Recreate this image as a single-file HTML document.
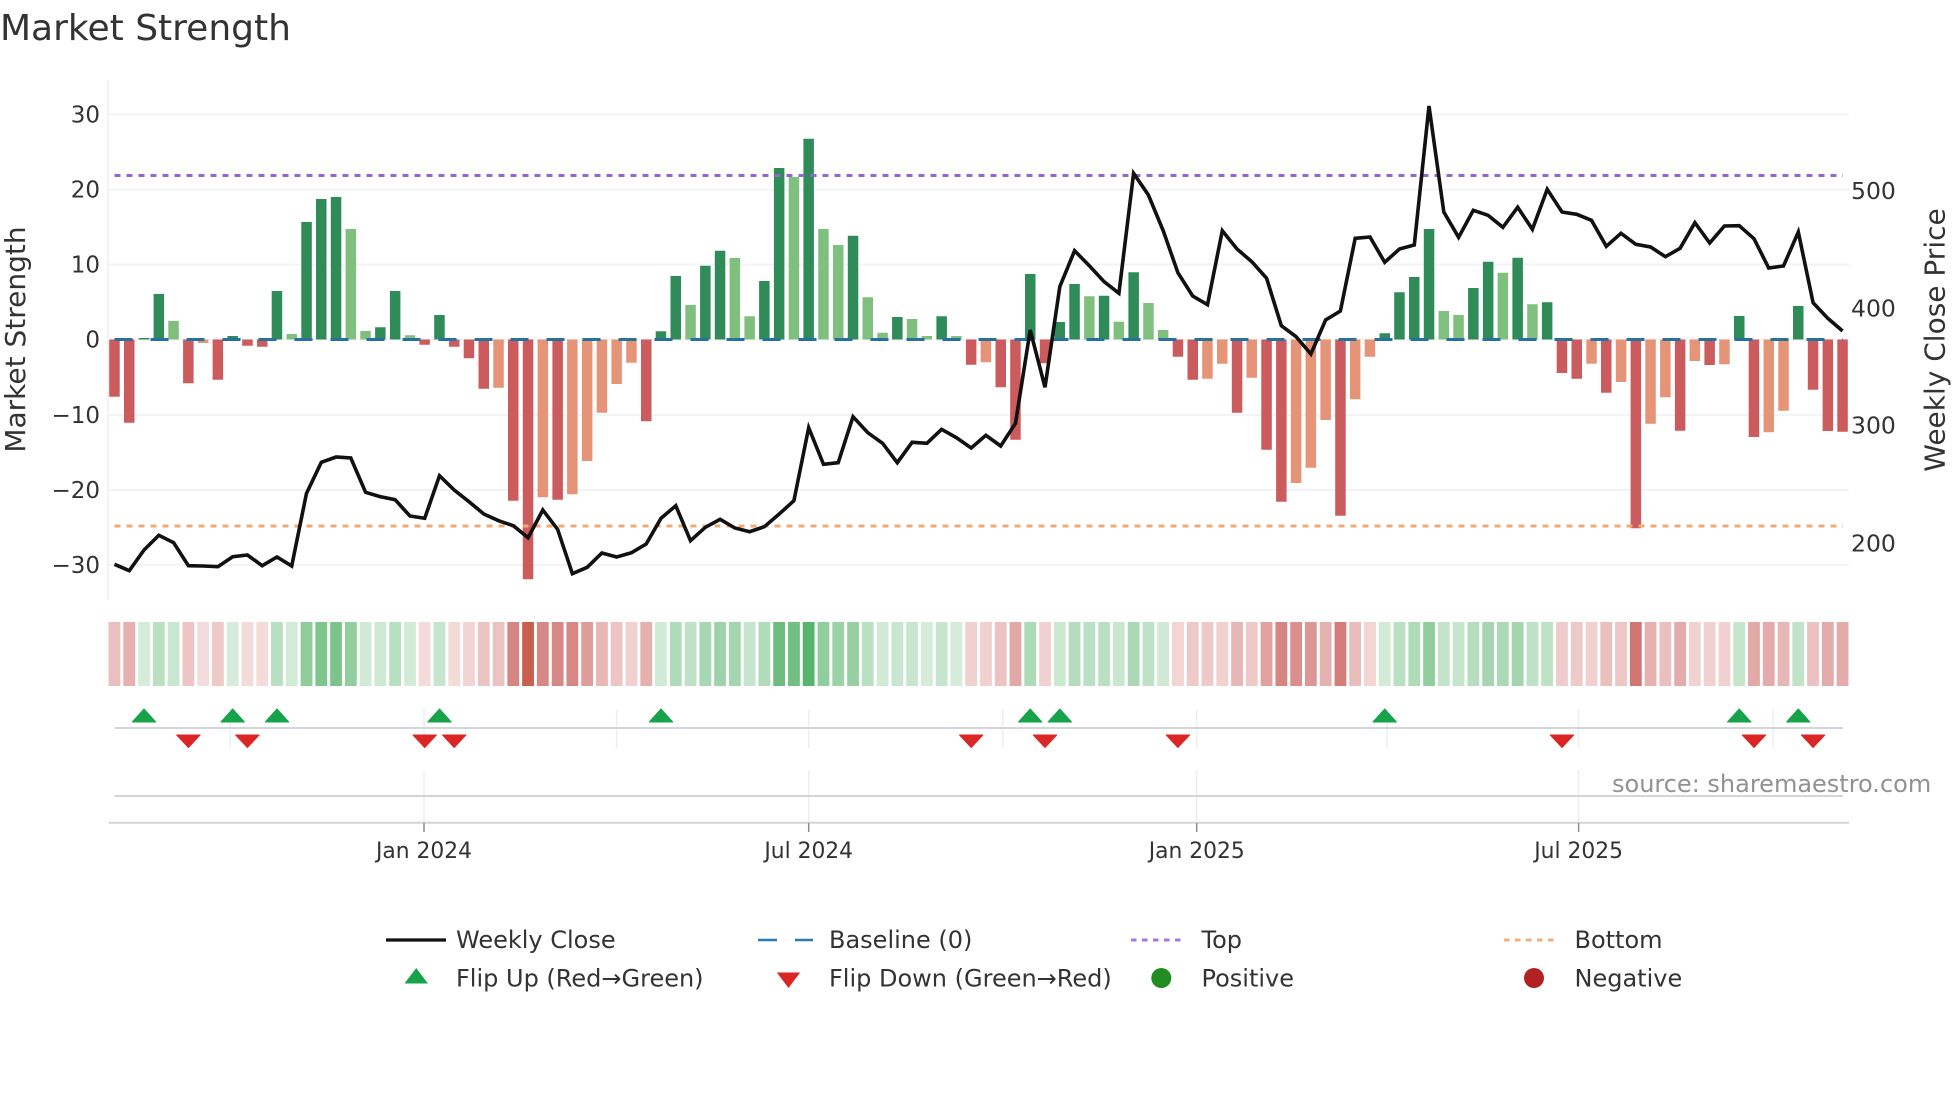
<!DOCTYPE html>
<html><head><meta charset="utf-8"><title>Market Strength</title>
<style>
html,body{margin:0;padding:0;background:#fff;width:1960px;height:1102px;overflow:hidden}
svg{display:block}
text{font-family:"DejaVu Sans","Liberation Sans",sans-serif;fill:#333}
.t{font-size:24px}
.yl{font-size:23px}
.yr{font-size:23.5px}
.xt{font-size:21.8px}
.cells rect{y:622px;width:11.8px;height:64px}
.g{fill:#58b46c}.r{fill:#c85a56}
</style></head><body>
<svg xmlns="http://www.w3.org/2000/svg" width="1960" height="1102" viewBox="0 0 1960 1102">
<rect width="1960" height="1102" fill="#fff"/>
<text x="0" y="40" style="font-size:36px">Market Strength</text>

<!-- grid -->
<path d="M108 114.5H1849M108 189.5H1849M108 264.5H1849M108 339.5H1849M108 415H1849M108 490H1849M108 565H1849" stroke="#f1f3f6" stroke-width="2" fill="none"/>
<path d="M108 80V599" stroke="#f1f3f6" stroke-width="2" fill="none"/>

<!-- bars -->
<path fill="#2f8b58" d="M138.8 339.5V338h10.5V339.5zM153.6 339.5V294h10.5V339.5zM227.4 339.5V336h10.5V339.5zM271.7 339.5V291h10.5V339.5zM301.3 339.5V222h10.5V339.5zM316 339.5V199h10.5V339.5zM330.8 339.5V197h10.5V339.5zM375.1 339.5V327.3h10.5V339.5zM389.9 339.5V291h10.5V339.5zM434.2 339.5V315h10.5V339.5zM655.7 339.5V331.3h10.5V339.5zM670.5 339.5V276h10.5V339.5zM700.1 339.5V265.7h10.5V339.5zM714.8 339.5V250.7h10.5V339.5zM759.1 339.5V281h10.5V339.5zM773.9 339.5V168h10.5V339.5zM803.4 339.5V138.7h10.5V339.5zM847.8 339.5V235.7h10.5V339.5zM892.1 339.5V317h10.5V339.5zM936.4 339.5V316.3h10.5V339.5zM1025 339.5V274h10.5V339.5zM1054.5 339.5V322h10.5V339.5zM1069.3 339.5V284h10.5V339.5zM1098.8 339.5V295.7h10.5V339.5zM1128.4 339.5V272.3h10.5V339.5zM1379.5 339.5V333.3h10.5V339.5zM1394.2 339.5V292.3h10.5V339.5zM1409 339.5V277h10.5V339.5zM1423.8 339.5V229h10.5V339.5zM1468.1 339.5V288h10.5V339.5zM1482.9 339.5V261.7h10.5V339.5zM1512.4 339.5V257.7h10.5V339.5zM1541.9 339.5V302.3h10.5V339.5zM1734 339.5V316h10.5V339.5zM1793 339.5V306h10.5V339.5z"/>
<path fill="#7fc07f" d="M168.3 339.5V321h10.5V339.5zM286.5 339.5V334h10.5V339.5zM345.6 339.5V229h10.5V339.5zM360.3 339.5V331h10.5V339.5zM404.7 339.5V335.3h10.5V339.5zM685.3 339.5V305h10.5V339.5zM729.6 339.5V258h10.5V339.5zM744.4 339.5V316.3h10.5V339.5zM788.7 339.5V177h10.5V339.5zM818.2 339.5V229h10.5V339.5zM833 339.5V245h10.5V339.5zM862.5 339.5V297.3h10.5V339.5zM877.3 339.5V332.7h10.5V339.5zM906.8 339.5V319h10.5V339.5zM921.6 339.5V336h10.5V339.5zM951.1 339.5V336h10.5V339.5zM1084.1 339.5V296.3h10.5V339.5zM1113.6 339.5V321.7h10.5V339.5zM1143.2 339.5V303h10.5V339.5zM1157.9 339.5V330h10.5V339.5zM1438.6 339.5V311h10.5V339.5zM1453.3 339.5V315h10.5V339.5zM1497.6 339.5V272.7h10.5V339.5zM1527.2 339.5V304.3h10.5V339.5z"/>
<path fill="#cb5b5c" d="M109.2 339.5V396.7h10.5V339.5zM124 339.5V422.7h10.5V339.5zM183.1 339.5V383.3h10.5V339.5zM212.6 339.5V379.7h10.5V339.5zM242.2 339.5V345.7h10.5V339.5zM257 339.5V346.7h10.5V339.5zM419.4 339.5V344.7h10.5V339.5zM449 339.5V346.7h10.5V339.5zM463.7 339.5V358.3h10.5V339.5zM478.5 339.5V388.7h10.5V339.5zM508 339.5V500.7h10.5V339.5zM522.8 339.5V579.3h10.5V339.5zM552.4 339.5V499.7h10.5V339.5zM641 339.5V421.3h10.5V339.5zM965.9 339.5V364.7h10.5V339.5zM995.5 339.5V387.3h10.5V339.5zM1010.2 339.5V439.7h10.5V339.5zM1039.8 339.5V363.3h10.5V339.5zM1172.7 339.5V356.7h10.5V339.5zM1187.5 339.5V379.7h10.5V339.5zM1231.8 339.5V412.7h10.5V339.5zM1261.3 339.5V449.7h10.5V339.5zM1276.1 339.5V501.7h10.5V339.5zM1335.2 339.5V515.7h10.5V339.5zM1556.7 339.5V373h10.5V339.5zM1571.5 339.5V378.7h10.5V339.5zM1601 339.5V392.7h10.5V339.5zM1630.6 339.5V528.3h10.5V339.5zM1674.9 339.5V430.7h10.5V339.5zM1704.4 339.5V365h10.5V339.5zM1748.7 339.5V437h10.5V339.5zM1807.8 339.5V389.7h10.5V339.5zM1822.6 339.5V431h10.5V339.5zM1837.3 339.5V431.7h10.5V339.5z"/>
<path fill="#e59478" d="M197.9 339.5V343h10.5V339.5zM493.3 339.5V387.7h10.5V339.5zM537.6 339.5V497.3h10.5V339.5zM567.1 339.5V494.3h10.5V339.5zM581.9 339.5V461h10.5V339.5zM596.7 339.5V412.7h10.5V339.5zM611.4 339.5V384h10.5V339.5zM626.2 339.5V362.7h10.5V339.5zM980.7 339.5V362.3h10.5V339.5zM1202.2 339.5V378.7h10.5V339.5zM1217 339.5V363.7h10.5V339.5zM1246.5 339.5V377.7h10.5V339.5zM1290.9 339.5V483h10.5V339.5zM1305.6 339.5V467.7h10.5V339.5zM1320.4 339.5V420h10.5V339.5zM1349.9 339.5V399.3h10.5V339.5zM1364.7 339.5V356.7h10.5V339.5zM1586.3 339.5V363.7h10.5V339.5zM1615.8 339.5V382h10.5V339.5zM1645.3 339.5V423.7h10.5V339.5zM1660.1 339.5V397.3h10.5V339.5zM1689.6 339.5V361h10.5V339.5zM1719.2 339.5V364.3h10.5V339.5zM1763.5 339.5V432.3h10.5V339.5zM1778.3 339.5V410.7h10.5V339.5z"/>

<!-- reference lines -->
<path d="M114.5 339.5H1843" stroke="#27719f" stroke-width="3" stroke-dasharray="18 18" fill="none"/>
<path d="M114.5 175.5H1843" stroke="#9467cf" stroke-width="3" stroke-dasharray="6 6" fill="none"/>
<path d="M114.5 526H1843" stroke="#f2aa74" stroke-width="3" stroke-dasharray="6 6" fill="none"/>

<!-- weekly close -->
<polyline fill="none" stroke="#111" stroke-width="3.6" stroke-linejoin="miter" points="114.5,564.3 129.3,570.7 144,550 158.8,535.3 173.6,542.7 188.4,565.7 203.1,566 217.9,566.7 232.7,556.7 247.4,555 262.2,565.7 277,557 291.7,566 306.5,493.3 321.3,462.3 336.1,457 350.8,458 365.6,492.3 380.4,496.7 395.1,499.7 409.9,516 424.7,518.3 439.5,475.7 454.2,490 469,501.7 483.8,514 498.5,520.7 513.3,525.7 528.1,537.7 542.8,510 557.6,529.3 572.4,573.7 587.2,567.3 601.9,553 616.7,557 631.5,552.7 646.2,544 661,518.3 675.8,505.7 690.5,540.7 705.3,527.3 720.1,519.3 734.9,528 749.6,531.7 764.4,526.7 779.2,514 793.9,500.7 808.7,427.7 823.5,464.3 838.2,462.7 853,416.7 867.8,432.7 882.6,443.3 897.3,462.7 912.1,442.3 926.9,443.3 941.6,429.3 956.4,437.7 971.2,448 985.9,435.3 1000.7,446 1015.5,423.3 1030.2,330 1045,387.3 1059.8,286.7 1074.6,250.7 1089.3,265.7 1104.1,281.7 1118.9,293.3 1133.6,173.3 1148.4,195 1163.2,230.7 1177.9,272.7 1192.7,296 1207.5,304.7 1222.3,230.7 1237,249 1251.8,261.7 1266.6,278.3 1281.3,325.7 1296.1,336.7 1310.9,354 1325.6,320 1340.4,311 1355.2,238.3 1370,237 1384.7,262.3 1399.5,249 1414.3,245 1429,106 1443.8,212 1458.6,237.3 1473.3,210.3 1488.1,215.3 1502.9,227.3 1517.7,207.3 1532.4,229.3 1547.2,189.3 1562,212 1576.7,214.3 1591.5,220.3 1606.3,246.3 1621,233.3 1635.8,244.3 1650.6,247 1665.4,256.7 1680.1,248.3 1694.9,222.7 1709.7,243 1724.4,226 1739.2,225.7 1754,238.7 1768.7,268 1783.5,266 1798.3,232 1813.1,302.7 1827.8,318.3 1842.6,331"/>

<!-- heat strip -->
<g class="cells" transform="translate(-.65 0)">
<rect class="r" x="109.2" opacity=".39"/><rect class="r" x="124" opacity=".48"/><rect class="g" x="138.8" opacity=".26"/><rect class="g" x="153.6" opacity=".42"/><rect class="g" x="168.3" opacity=".32"/><rect class="r" x="183.1" opacity=".35"/><rect class="r" x="197.9" opacity=".21"/><rect class="r" x="212.6" opacity=".33"/><rect class="g" x="227.4" opacity=".26"/><rect class="r" x="242.2" opacity=".22"/>
<rect class="r" x="257" opacity=".22"/><rect class="g" x="271.7" opacity=".43"/><rect class="g" x="286.5" opacity=".27"/><rect class="g" x="301.3" opacity=".68"/><rect class="g" x="316" opacity=".77"/><rect class="g" x="330.8" opacity=".78"/><rect class="g" x="345.6" opacity=".66"/><rect class="g" x="360.3" opacity=".28"/><rect class="g" x="375.1" opacity=".3"/><rect class="g" x="389.9" opacity=".43"/>
<rect class="g" x="404.7" opacity=".27"/><rect class="r" x="419.4" opacity=".22"/><rect class="g" x="434.2" opacity=".34"/><rect class="r" x="449" opacity=".22"/><rect class="r" x="463.7" opacity=".26"/><rect class="r" x="478.5" opacity=".36"/><rect class="r" x="493.3" opacity=".36"/><rect class="r" x="508" opacity=".74"/><rect class="r" x="522.8" opacity="1" style="fill:#c95f4f"/><rect class="r" x="537.6" opacity=".73"/>
<rect class="r" x="552.4" opacity=".73"/><rect class="r" x="567.1" opacity=".72"/><rect class="r" x="581.9" opacity=".6"/><rect class="r" x="596.7" opacity=".44"/><rect class="r" x="611.4" opacity=".35"/><rect class="r" x="626.2" opacity=".28"/><rect class="r" x="641" opacity=".47"/><rect class="g" x="655.7" opacity=".28"/><rect class="g" x="670.5" opacity=".48"/><rect class="g" x="685.3" opacity=".38"/>
<rect class="g" x="700.1" opacity=".52"/><rect class="g" x="714.8" opacity=".58"/><rect class="g" x="729.6" opacity=".55"/><rect class="g" x="744.4" opacity=".34"/><rect class="g" x="759.1" opacity=".47"/><rect class="g" x="773.9" opacity=".88"/><rect class="g" x="788.7" opacity=".85"/><rect class="g" x="803.4" opacity="1"/><rect class="g" x="818.2" opacity=".66"/><rect class="g" x="833" opacity=".6"/>
<rect class="g" x="847.8" opacity=".63"/><rect class="g" x="862.5" opacity=".41"/><rect class="g" x="877.3" opacity=".28"/><rect class="g" x="892.1" opacity=".33"/><rect class="g" x="906.8" opacity=".33"/><rect class="g" x="921.6" opacity=".26"/><rect class="g" x="936.4" opacity=".34"/><rect class="g" x="951.1" opacity=".26"/><rect class="r" x="965.9" opacity=".28"/><rect class="r" x="980.7" opacity=".28"/>
<rect class="r" x="995.5" opacity=".36"/><rect class="r" x="1010.2" opacity=".53"/><rect class="g" x="1025" opacity=".49"/><rect class="r" x="1039.8" opacity=".28"/><rect class="g" x="1054.5" opacity=".31"/><rect class="g" x="1069.3" opacity=".45"/><rect class="g" x="1084.1" opacity=".41"/><rect class="g" x="1098.8" opacity=".41"/><rect class="g" x="1113.6" opacity=".32"/><rect class="g" x="1128.4" opacity=".5"/>
<rect class="g" x="1143.2" opacity=".39"/><rect class="g" x="1157.9" opacity=".29"/><rect class="r" x="1172.7" opacity=".26"/><rect class="r" x="1187.5" opacity=".33"/><rect class="r" x="1202.2" opacity=".33"/><rect class="r" x="1217" opacity=".28"/><rect class="r" x="1231.8" opacity=".44"/><rect class="r" x="1246.5" opacity=".33"/><rect class="r" x="1261.3" opacity=".57"/><rect class="r" x="1276.1" opacity=".74"/>
<rect class="r" x="1290.9" opacity=".68"/><rect class="r" x="1305.6" opacity=".63"/><rect class="r" x="1320.4" opacity=".47"/><rect class="r" x="1335.2" opacity=".79"/><rect class="r" x="1349.9" opacity=".4"/><rect class="r" x="1364.7" opacity=".26"/><rect class="g" x="1379.5" opacity=".27"/><rect class="g" x="1394.2" opacity=".42"/><rect class="g" x="1409" opacity=".48"/><rect class="g" x="1423.8" opacity=".66"/>
<rect class="g" x="1438.6" opacity=".36"/><rect class="g" x="1453.3" opacity=".34"/><rect class="g" x="1468.1" opacity=".44"/><rect class="g" x="1482.9" opacity=".54"/><rect class="g" x="1497.6" opacity=".5"/><rect class="g" x="1512.4" opacity=".55"/><rect class="g" x="1527.2" opacity=".38"/><rect class="g" x="1541.9" opacity=".39"/><rect class="r" x="1556.7" opacity=".31"/><rect class="r" x="1571.5" opacity=".33"/>
<rect class="r" x="1586.3" opacity=".28"/><rect class="r" x="1601" opacity=".38"/><rect class="r" x="1615.8" opacity=".34"/><rect class="r" x="1630.6" opacity=".83"/><rect class="r" x="1645.3" opacity=".48"/><rect class="r" x="1660.1" opacity=".39"/><rect class="r" x="1674.9" opacity=".5"/><rect class="r" x="1689.6" opacity=".27"/><rect class="r" x="1704.4" opacity=".28"/><rect class="r" x="1719.2" opacity=".28"/>
<rect class="g" x="1734" opacity=".34"/><rect class="r" x="1748.7" opacity=".52"/><rect class="r" x="1763.5" opacity=".51"/><rect class="r" x="1778.3" opacity=".44"/><rect class="g" x="1793" opacity=".37"/><rect class="r" x="1807.8" opacity=".37"/><rect class="r" x="1822.6" opacity=".5"/><rect class="r" x="1837.3" opacity=".51"/>
</g>

<!-- vertical guides in lower rows -->
<path d="M230.2 709V748M424 709V748M616.6 709V748M808.7 709V748M1002.7 709V748M1196.7 709V748M1387 709V748M1578.6 709V748M1773 709V748M424 770V822M808.7 770V822M1196.7 770V822M1578.6 770V822" stroke="#eceef2" stroke-width="1.5" fill="none"/>
<path d="M114.5 728H1843M114.5 796H1843" stroke="#d2d5da" stroke-width="2" fill="none"/>
<path d="M108.5 822.7H1849" stroke="#d2d5da" stroke-width="2" fill="none"/>
<path d="M424 823V832M808.7 823V832M1196.7 823V832M1578.6 823V832" stroke="#8c8c8c" stroke-width="1.5" fill="none"/>

<!-- flip markers -->
<path fill="#17a34a" stroke="#17a34a" stroke-width="1" stroke-linejoin="round" d="M144 709l11.7 13h-23.4zM232.7 709l11.7 13h-23.4zM277 709l11.7 13h-23.4zM439.5 709l11.7 13h-23.4zM661 709l11.7 13h-23.4zM1030.2 709l11.7 13h-23.4zM1059.8 709l11.7 13h-23.4zM1384.7 709l11.7 13h-23.4zM1739.2 709l11.7 13h-23.4zM1798.3 709l11.7 13h-23.4z"/>
<path fill="#dc2626" stroke="#dc2626" stroke-width="1" stroke-linejoin="round" d="M188.4 747.5l11.7 -12.5h-23.4zM247.4 747.5l11.7 -12.5h-23.4zM424.7 747.5l11.7 -12.5h-23.4zM454.2 747.5l11.7 -12.5h-23.4zM971.2 747.5l11.7 -12.5h-23.4zM1045 747.5l11.7 -12.5h-23.4zM1177.9 747.5l11.7 -12.5h-23.4zM1562 747.5l11.7 -12.5h-23.4zM1754 747.5l11.7 -12.5h-23.4zM1813.1 747.5l11.7 -12.5h-23.4z"/>

<!-- left ticks -->
<g class="yl" text-anchor="end">
<text x="100" y="122.5">30</text>
<text x="100" y="197.5">20</text>
<text x="100" y="272.5">10</text>
<text x="100" y="347.5">0</text>
<text x="100" y="423">−10</text>
<text x="100" y="498">−20</text>
<text x="100" y="573">−30</text>
</g>
<!-- right ticks -->
<g class="yr">
<text x="1851" y="199">500</text>
<text x="1851" y="316.7">400</text>
<text x="1851" y="433.5">300</text>
<text x="1851" y="551.5">200</text>
</g>
<!-- axis titles -->
<text transform="translate(25 339.5) rotate(-90)" text-anchor="middle" style="font-size:28px">Market Strength</text>
<text transform="translate(1944.5 340) rotate(-90)" text-anchor="middle" style="font-size:28px">Weekly Close Price</text>
<!-- x ticks -->
<g class="xt" text-anchor="middle">
<text x="424" y="858">Jan 2024</text>
<text x="808.7" y="858">Jul 2024</text>
<text x="1196.7" y="858">Jan 2025</text>
<text x="1578.6" y="858">Jul 2025</text>
</g>
<text x="1612" y="792" style="font-size:24px;fill:#929292">source: sharemaestro.com</text>

<!-- legend -->
<path d="M386 940H446" stroke="#111" stroke-width="3.2" fill="none"/>
<path d="M758 940H777M795 940H813" stroke="#2b7bb0" stroke-width="2.6" fill="none"/>
<path d="M1131 940H1186" stroke="#a878e2" stroke-width="3" stroke-dasharray="5.5 5.5" fill="none"/>
<path d="M1504 940H1558" stroke="#f2ae7c" stroke-width="3" stroke-dasharray="5.5 5.5" fill="none"/>
<path d="M416.2 968l11.7 15.5h-23.4z" fill="#17a34a"/>
<path d="M788.5 988l11.7 -15.5h-23.4z" fill="#dc2626"/>
<circle cx="1161.3" cy="978" r="10" fill="#228b22"/>
<circle cx="1534" cy="978" r="10" fill="#b22222"/>
<g class="t">
<text x="456" y="948">Weekly Close</text>
<text x="829" y="948">Baseline (0)</text>
<text x="1201.5" y="948">Top</text>
<text x="1574.5" y="948">Bottom</text>
<text x="456" y="986.5">Flip Up (Red→Green)</text>
<text x="829" y="986.5">Flip Down (Green→Red)</text>
<text x="1201.5" y="986.5">Positive</text>
<text x="1574.5" y="986.5">Negative</text>
</g>
</svg>
</body></html>
